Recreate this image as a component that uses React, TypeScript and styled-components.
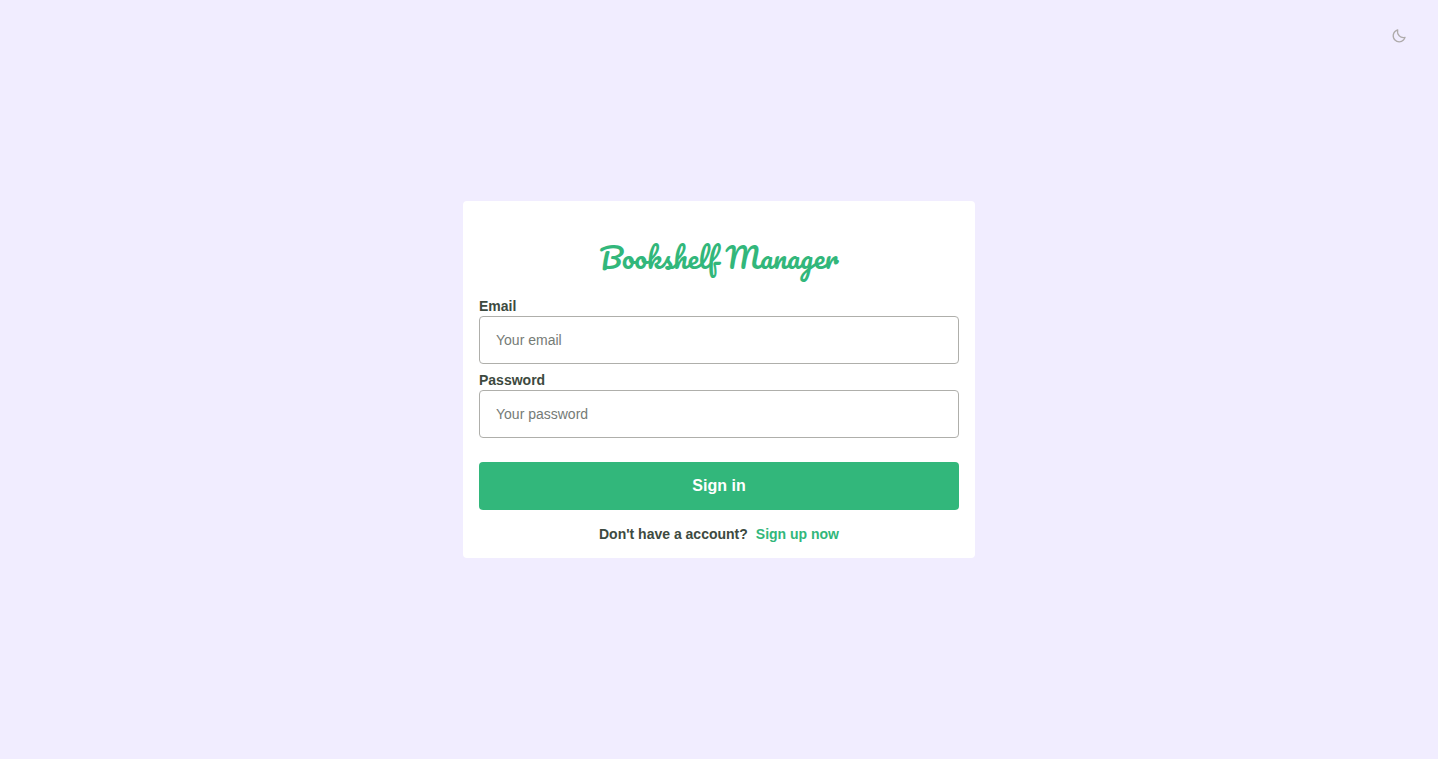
import React from "react";
import styled, { createGlobalStyle } from "styled-components";
import { BiMoon } from "react-icons/bi";

const GlobalStyle = createGlobalStyle`
  * { box-sizing: border-box; margin: 0; padding: 0; }
  body { background: #f1edff; }
  body, input, button { font-family: "Liberation Sans", Arial, sans-serif; }
`;

const Page = styled.div`
  min-height: 100vh;
  display: grid;
  grid-template-rows: 72px 1fr 72px;
`;

const Header = styled.header`
  display: flex;
  align-items: center;
  justify-content: flex-end;
  padding: 0 31px;
`;

const ThemeButton = styled.button`
  display: flex;
  border: 0;
  background: transparent;
  color: #afabab;
  cursor: pointer;
`;

const Main = styled.main`
  display: flex;
  align-items: center;
  justify-content: center;
`;

const Card = styled.form`
  width: 512px;
  height: 357px;
  padding: 32px 16px 16px;
  border-radius: 4px;
  background: #fff;
  display: flex;
  flex-direction: column;
`;

const Logo = styled.h1`
  height: 57px;
  margin-bottom: 8px;
  line-height: 50px;
  text-align: center;
  white-space: nowrap;
  font-family: Pacifico, cursive;
  font-size: 28px;
  font-weight: 400;
  color: #32b77b;
`;

const Field = styled.label`
  display: flex;
  flex-direction: column;
  margin-bottom: 8px;
  color: #3d4a40;
  font-size: 14px;
  font-weight: 700;
  line-height: 18px;
`;

const LabelText = styled.span`
  height: 18px;
  line-height: 16px;
`;

const Input = styled.input`
  height: 48px;
  padding: 0 16px;
  border: 1px solid #afafab;
  border-radius: 4px;
  background: #fff;
  color: #3d4a40;
  font-size: 14px;
  &::placeholder { color: #757b76; }
`;

const SubmitButton = styled.button`
  height: 48px;
  margin-top: 16px;
  border: 0;
  border-radius: 4px;
  background: #32b77b;
  color: #fff;
  font-size: 16px;
  font-weight: 700;
  cursor: pointer;
`;

const Footer = styled.p`
  display: flex;
  justify-content: center;
  gap: 8px;
  margin-top: 16px;
  color: #3d4a40;
  font-size: 14px;
  font-weight: 700;
  line-height: 16px;
`;

const SignUpLink = styled.a`
  color: #32b77b;
  text-decoration: none;
`;

export default function App() {
  return (
    <Page>
      <GlobalStyle />
      <Header>
        <ThemeButton type="button" aria-label="Toggle theme">
          <BiMoon size={16} />
        </ThemeButton>
      </Header>
      <Main>
        <Card onSubmit={(event) => event.preventDefault()}>
          <Logo>Bookshelf Manager</Logo>
          <Field>
            <LabelText>Email</LabelText>
            <Input type="email" placeholder="Your email" />
          </Field>
          <Field>
            <LabelText>Password</LabelText>
            <Input type="password" placeholder="Your password" />
          </Field>
          <SubmitButton type="submit">Sign in</SubmitButton>
          <Footer>
            Don't have a account?
            <SignUpLink href="#signup">Sign up now</SignUpLink>
          </Footer>
        </Card>
      </Main>
    </Page>
  );
}
